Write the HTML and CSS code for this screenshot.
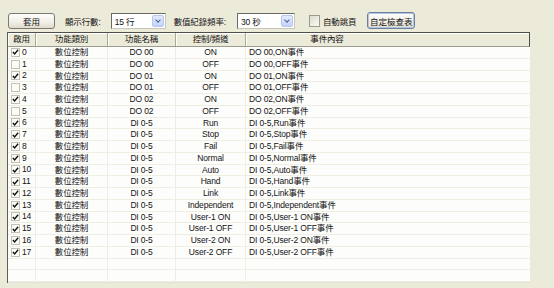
FILE: index.html
```html
<!DOCTYPE html>
<html lang="zh-Hant">
<head>
    <meta charset="UTF-8">
    <title>事件設定</title>
    <link rel="stylesheet" href="styles.css">
</head>
<body>
    <div class="toolbar">
        <button class="btn btn-apply">套用</button>
        <span class="lbl lbl-rows">顯示行數:</span>
        <div class="select sel-rows"><span>15 行</span><i class="arrow"></i></div>
        <span class="lbl lbl-rate">數值紀錄頻率:</span>
        <div class="select sel-rate"><span>30 秒</span><i class="arrow"></i></div>
        <label class="auto"><span class="autobox"></span>自動跳頁</label>
        <button class="btn btn-custom">自定檢查表</button>
    </div>
    <div class="list">
        <div class="head">
            <div class="hc c-en">啟用</div>
            <div class="hc c-type">功能類別</div>
            <div class="hc c-name">功能名稱</div>
            <div class="hc c-ch">控制/頻道</div>
            <div class="hc c-ev last">事件內容</div>
            <div class="hc c-fill"></div>
        </div>
        <div class="rows" id="rows"></div>
    </div>
    <script>
        const data = [
            [1, "DO 00", "ON"], [0, "DO 00", "OFF"],
            [1, "DO 01", "ON"], [0, "DO 01", "OFF"],
            [1, "DO 02", "ON"], [0, "DO 02", "OFF"],
            [1, "DI 0-5", "Run"], [1, "DI 0-5", "Stop"],
            [1, "DI 0-5", "Fail"], [1, "DI 0-5", "Normal"],
            [1, "DI 0-5", "Auto"], [1, "DI 0-5", "Hand"],
            [1, "DI 0-5", "Link"], [1, "DI 0-5", "Independent"],
            [1, "DI 0-5", "User-1 ON"], [1, "DI 0-5", "User-1 OFF"],
            [1, "DI 0-5", "User-2 ON"], [1, "DI 0-5", "User-2 OFF"]
        ];
        const tick = '<svg viewBox="0 0 8 8" width="8" height="8"><polyline points="1,4 3,6.2 7,1.5" fill="none" stroke="#111" stroke-width="1.6"/></svg>';
        let html = "";
        data.forEach(function (d, i) {
            html += '<div class="row">' +
                '<div class="c c-en"><span class="cb">' + (d[0] ? tick : "") + '</span>' + i + '</div>' +
                '<div class="c c-type">數位控制</div>' +
                '<div class="c c-name">' + d[1] + '</div>' +
                '<div class="c c-ch">' + d[2] + '</div>' +
                '<div class="c c-ev">' + d[1] + ',' + d[2] + '事件</div>' +
                '<div class="c c-fill"></div></div>';
        });
        for (let i = 0; i < 2; i++) {
            html += '<div class="row"><div class="c c-en"></div><div class="c c-type"></div><div class="c c-name"></div><div class="c c-ch"></div><div class="c c-ev"></div><div class="c c-fill"></div></div>';
        }
        document.getElementById("rows").innerHTML = html;
    </script>
</body>
</html>
```

FILE: styles.css
```css
body {
    margin: 0;
    padding: 0;
    background-color: #ecead9;
    font-family: "Liberation Sans", "Noto Sans CJK TC", sans-serif;
    font-size: 8.5px;
    letter-spacing: -0.15px;
    color: #141414;
    width: 554px;
    height: 288px;
    overflow: hidden;
}
.toolbar {
    display: flex;
    align-items: center;
    height: 17px;
    padding: 12px 0 0 8px;
    margin-bottom: 3px;
    white-space: nowrap;
}
.btn {
    font-family: inherit;
    font-size: 8.5px;
    letter-spacing: 0;
    color: #141414;
    height: 16px;
    padding: 0;
    white-space: nowrap;
    border: 1px solid #7a7a72;
    border-radius: 3px;
    background: linear-gradient(#fefefc, #f1efe6 60%, #dedbcc);
}
.btn-apply {
    width: 47px;
}
.btn-custom {
    width: 48px;
    height: 17px;
    margin-left: 11px;
    border-color: #6a7f9e;
    box-shadow: inset 0 0 0 1px #b5c6e0;
}
.lbl-rows {
    margin-left: 10px;
}
.lbl-rate {
    margin-left: 8px;
}
.select {
    display: flex;
    align-items: center;
    justify-content: space-between;
    box-sizing: border-box;
    width: 55px;
    height: 16px;
    margin-left: 10px;
    padding: 0 1px 0 3px;
    background: #fff;
    border: 1px solid #6b6b66;
    border-right-color: #c9c7ba;
    border-bottom-color: #c9c7ba;
}
.sel-rate {
    margin-left: 11px;
    width: 58px;
}
.arrow {
    position: relative;
    width: 12px;
    height: 12px;
    box-sizing: border-box;
    border: 1px solid #b7c7ee;
    border-radius: 2px;
    background: linear-gradient(#e3ebfd, #c2d3fc);
}
.arrow::after {
    content: "";
    position: absolute;
    left: 3px;
    top: 2px;
    width: 3px;
    height: 3px;
    border-right: 1.5px solid #4d6185;
    border-bottom: 1.5px solid #4d6185;
    transform: rotate(45deg);
}
.auto {
    display: flex;
    align-items: center;
    margin-left: 14px;
}
.autobox {
    width: 11px;
    height: 12px;
    box-sizing: border-box;
    margin-right: 3px;
    border: 1px solid #9d9b8c;
    background: linear-gradient(135deg, #dcdacc, #fbfbf8);
}
.list {
    margin-left: 7px;
    width: 522px;
    border-left: 1px solid #5d5d5a;
    box-shadow: inset 1px 0 #a9a798;
}
.head {
    display: flex;
    height: 15px;
    box-sizing: border-box;
    border-top: 1px solid #4e4e4b;
    border-right: 1px solid #4e4e4b;
    border-bottom: 1px solid #9d9b8d;
    background: #ecead9;
}
.hc {
    box-sizing: border-box;
    height: 13px;
    line-height: 13px;
    text-align: center;
    border-right: 1px solid #aca997;
    box-shadow: inset 1px 1px #fff;
}
.hc.last {
    border-right: none;
}
.c-en {
    width: 28px;
}
.c-type {
    width: 72px;
}
.c-name {
    width: 68px;
}
.c-ch {
    width: 70px;
}
.c-ev {
    width: 162px;
}
.c-fill {
    flex: 1;
}
.hc.c-fill {
    box-shadow: inset 0 1px #fff;
    border-right: none;
}
.rows {
    background: #fdfdfc;
    border-bottom: 1px solid #e3e1d2;
}
.row {
    display: flex;
    height: 11.75px;
    box-sizing: border-box;
    border-bottom: 1px solid #efeee2;
}
.c {
    box-sizing: border-box;
    line-height: 11px;
    text-align: center;
    white-space: nowrap;
    border-right: 1px solid #efeee2;
}
.c.c-en {
    display: flex;
    align-items: center;
    text-align: left;
    padding-left: 3px;
}
.c.c-ev {
    text-align: left;
    padding-left: 3px;
    border-right: none;
}
.c.c-fill {
    border-right: none;
}
.cb {
    display: flex;
    align-items: center;
    justify-content: center;
    width: 9px;
    height: 9px;
    box-sizing: border-box;
    margin-right: 2px;
    border: 1px solid #c2c0b1;
    background: #fbfbf7;
}
```
